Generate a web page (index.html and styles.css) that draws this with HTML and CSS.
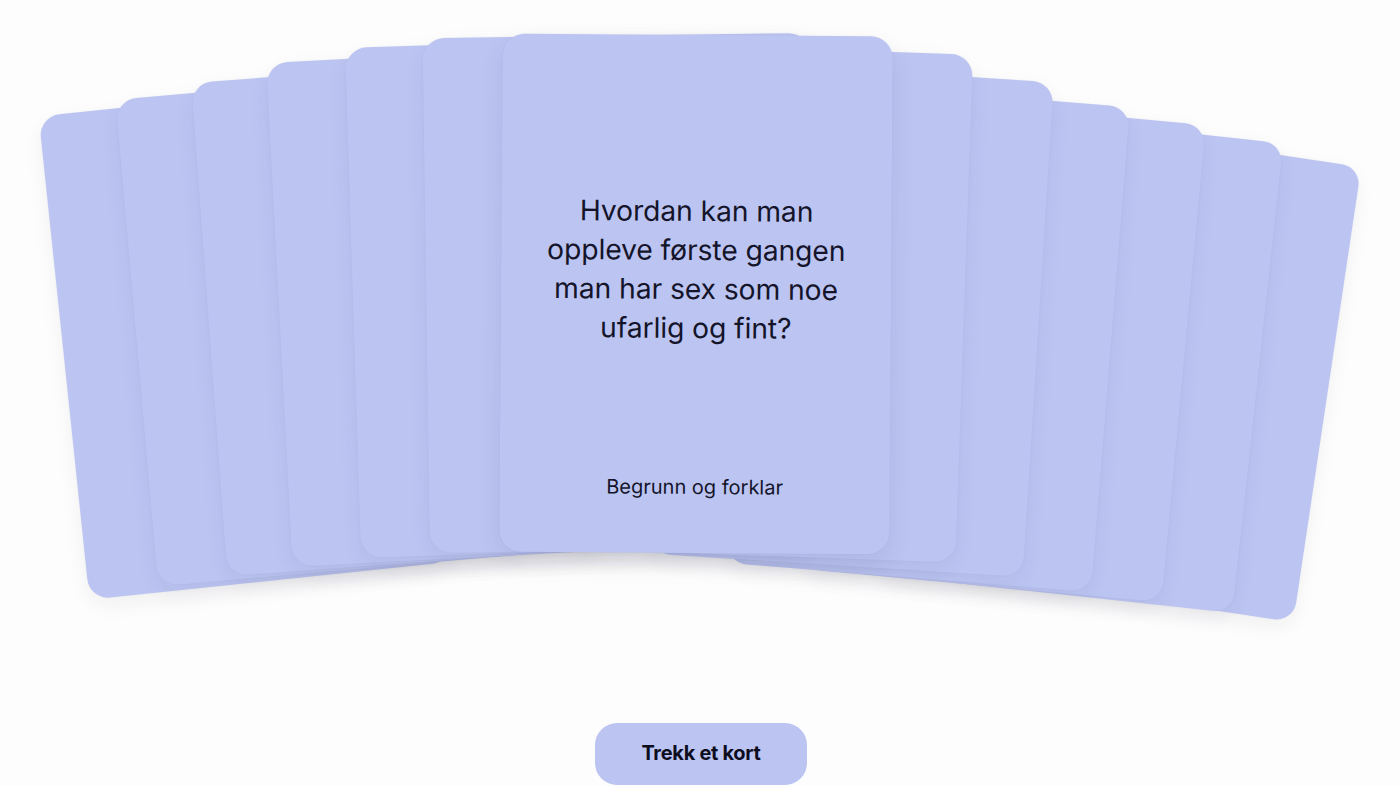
FILE: index.html
```html
<!DOCTYPE html>
<html lang="no">
<head>
<meta charset="utf-8">
<title>Trekk et kort</title>
<link rel="stylesheet" href="styles.css">
</head>
<body>
<main class="page">
  <section class="fan">
    <div class="card l6"></div>
    <div class="card l5"></div>
    <div class="card l4"></div>
    <div class="card l3"></div>
    <div class="card l2"></div>
    <div class="card l1"></div>
    <div class="card r6"></div>
    <div class="card r5"></div>
    <div class="card r4"></div>
    <div class="card r3"></div>
    <div class="card r2"></div>
    <div class="card r1"></div>
    <div class="card center">
      <p class="question">Hvordan kan man oppleve første gangen man har sex som noe ufarlig og fint?</p>
      <p class="hint">Begrunn og forklar</p>
    </div>
  </section>
  <div class="actions">
    <button class="draw" type="button">Trekk et kort</button>
  </div>
</main>
</body>
</html>
```
FILE: styles.css
```css
* { box-sizing: border-box; }
html, body { margin: 0; padding: 0; }
body {
  background: #fdfdfd;
  font-family: Inter, "Noto Sans", "Liberation Sans", sans-serif;
  color: #14142a;
  overflow: hidden;
}
.page {
  display: flex;
  flex-direction: column;
  align-items: center;
  height: 786px;
}
.fan {
  position: relative;
  width: 100%;
  height: 723px;
  flex: none;
}
.card {
  position: absolute;
  left: 50%;
  top: 0;
  width: 390px;
  height: 518px;
  margin-left: -195px;
  background: #bcc5f2;
  border-radius: 22px;
  box-shadow: 0 8px 22px rgba(30, 30, 60, 0.06), 0 0 2px rgba(40, 40, 90, 0.05);
  transform-origin: 50% 50%;
}
.l6 { z-index: 1; transform: translate(-454px, 80px) rotate(-6deg) scale(0.938); }
.l5 { z-index: 2; transform: translate(-380px, 68px) rotate(-5deg) scale(0.943); }
.l4 { z-index: 3; transform: translate(-305px, 57px) rotate(-4.2deg) scale(0.955); }
.l3 { z-index: 4; transform: translate(-231px, 46px) rotate(-3deg) scale(0.974); }
.l2 { z-index: 5; transform: translate(-155px, 38px) rotate(-1.8deg) scale(0.985); }
.l1 { z-index: 6; transform: translate(-80px, 34px) rotate(-0.8deg) scale(0.994); }
.r6 { z-index: 1; transform: translate(456px, 110px) rotate(8.5deg) scale(0.888); }
.r5 { z-index: 2; transform: translate(381px, 100px) rotate(6.2deg) scale(0.912); }
.r4 { z-index: 3; transform: translate(304px, 88px) rotate(5.3deg) scale(0.925); }
.r3 { z-index: 4; transform: translate(228px, 76px) rotate(4.6deg) scale(0.939); }
.r2 { z-index: 5; transform: translate(152px, 59px) rotate(3.6deg) scale(0.957); }
.r1 { z-index: 6; transform: translate(73px, 43px) rotate(2deg) scale(0.981); }
.center {
  z-index: 10;
  transform: translate(-4px, 35px) rotate(0.4deg);
  display: flex;
  flex-direction: column;
  align-items: center;
  padding: 30px 36px 54px;
  text-align: center;
  box-shadow: 0 10px 26px rgba(30, 30, 60, 0.08), 0 0 2px rgba(40, 40, 90, 0.06);
}
.question {
  flex: 1;
  display: flex;
  align-items: center;
  justify-content: center;
  margin: 0;
  max-width: 318px;
  font-size: 28.3px;
  line-height: 39px;
  font-weight: 400;
  letter-spacing: -0.1px;
}
.hint {
  margin: 0;
  font-size: 20px;
  line-height: 24px;
  font-weight: 400;
}
.actions {
  display: flex;
  justify-content: center;
  width: 100%;
}
.draw {
  width: 212px;
  height: 62px;
  margin-left: 2px;
  border: 0;
  border-radius: 22px;
  background: #bcc5f2;
  font-family: Inter, "Noto Sans", "Liberation Sans", sans-serif;
  font-size: 20px;
  font-weight: 700;
  color: #0d0d1e;
  letter-spacing: -0.3px;
  padding: 0 0 2px;
}
```
